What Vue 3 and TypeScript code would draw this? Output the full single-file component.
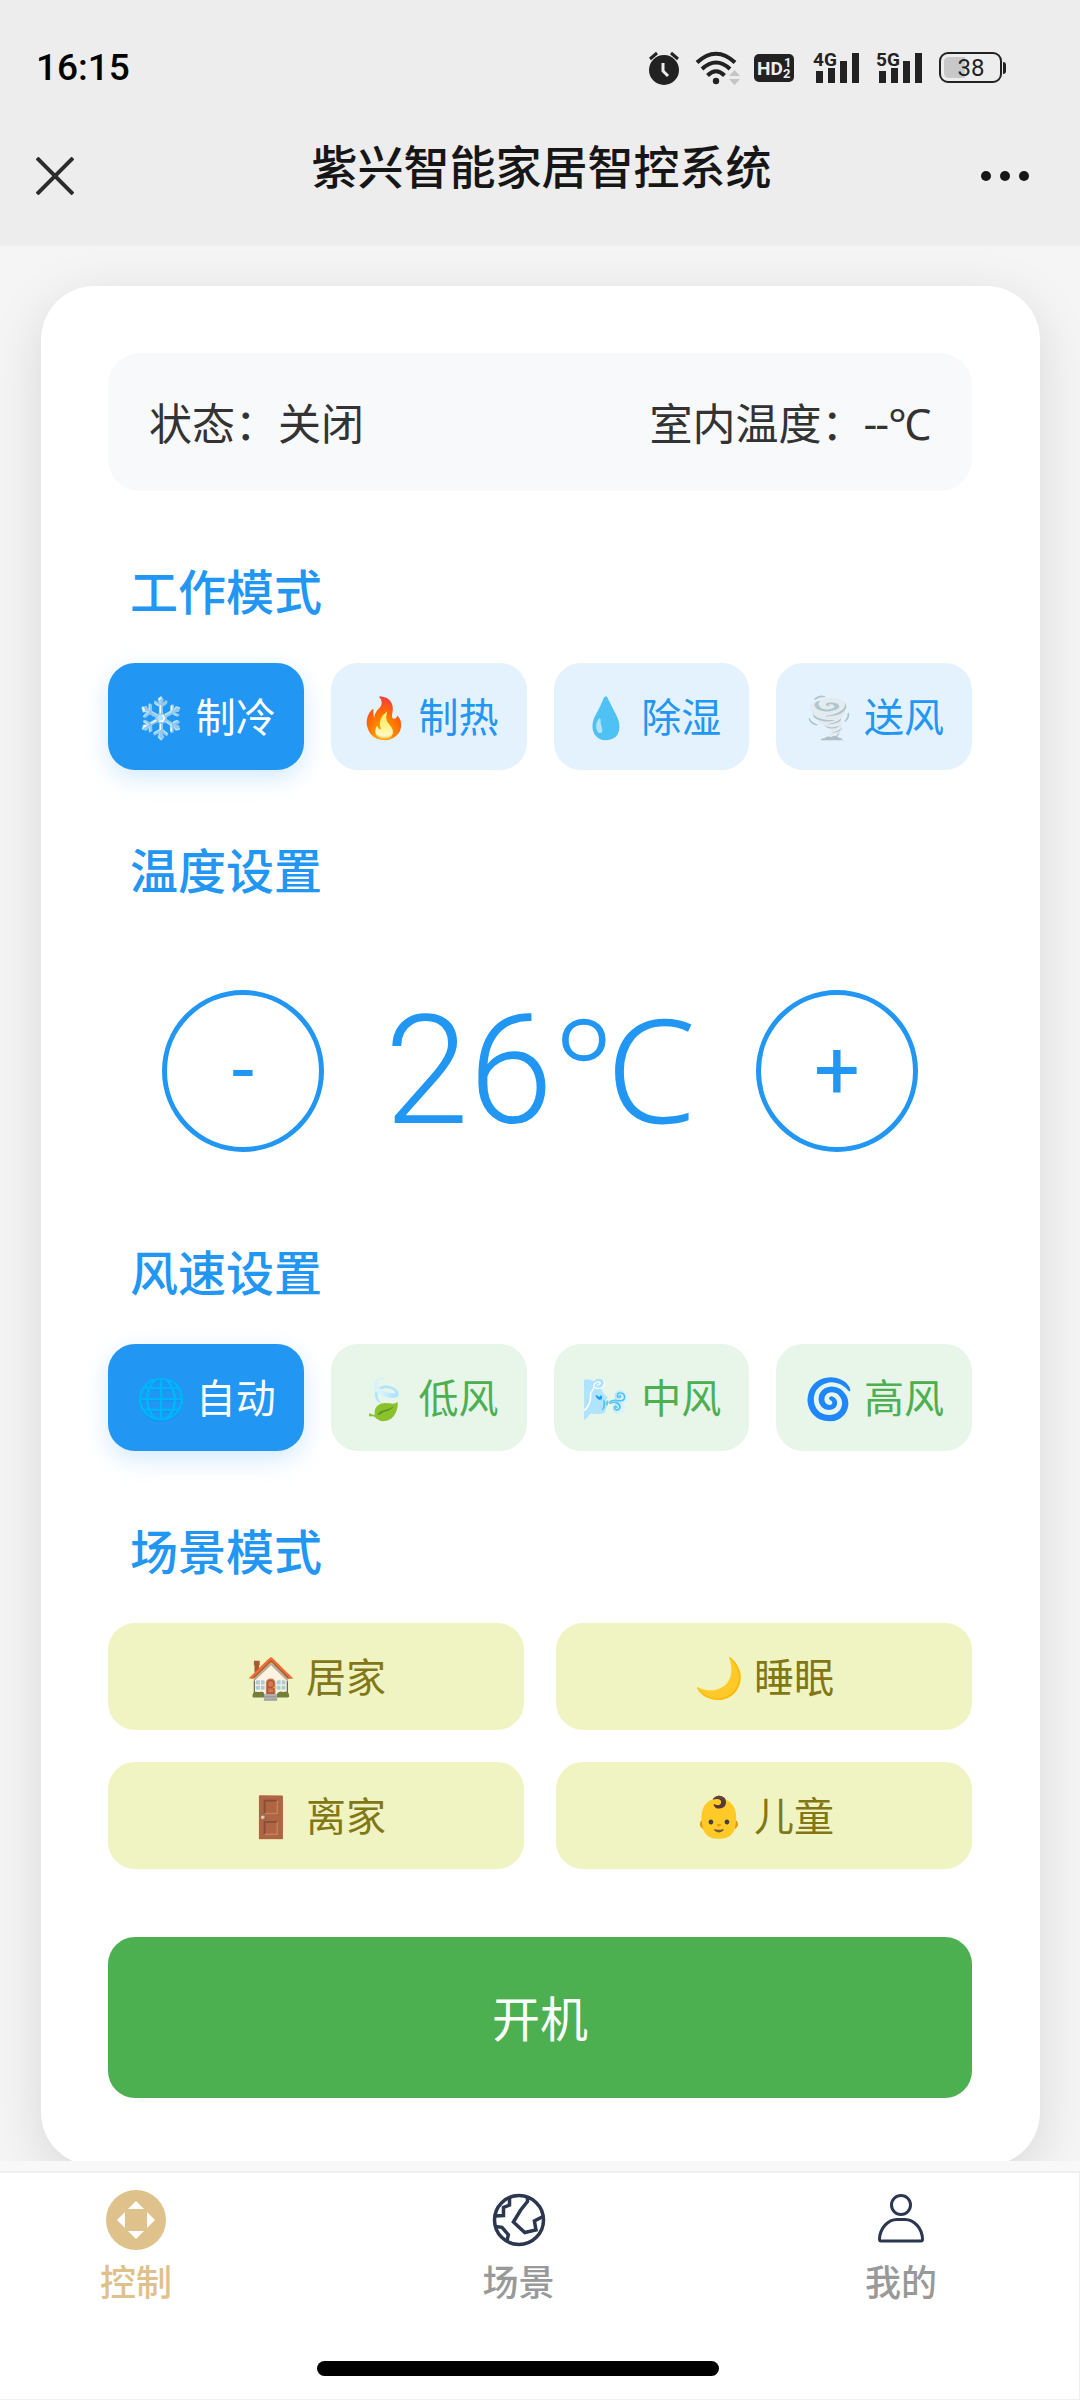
<script setup lang="ts">
import { ref } from 'vue'

interface Option {
  id: string
  icon: string
  label: string
}

const modes: Option[] = [
  { id: 'cool', icon: '❄️', label: '制冷' },
  { id: 'heat', icon: '🔥', label: '制热' },
  { id: 'dry', icon: '💧', label: '除湿' },
  { id: 'fan', icon: '🌪️', label: '送风' },
]
const speeds: Option[] = [
  { id: 'auto', icon: '🌐', label: '自动' },
  { id: 'low', icon: '🍃', label: '低风' },
  { id: 'mid', icon: '🌬️', label: '中风' },
  { id: 'high', icon: '🌀', label: '高风' },
]
const scenes: Option[] = [
  { id: 'home', icon: '🏠', label: '居家' },
  { id: 'sleep', icon: '🌙', label: '睡眠' },
  { id: 'away', icon: '🚪', label: '离家' },
  { id: 'kids', icon: '👶', label: '儿童' },
]

const power = ref(false)
const mode = ref('cool')
const speed = ref('auto')
const scene = ref('')
const temperature = ref(26)

function step(delta: number) {
  temperature.value = Math.min(30, Math.max(16, temperature.value + delta))
}
</script>

<template>
  <div class="app">
    <header class="top">
      <div class="statusbar">
        <time class="clock">16:15</time>
        <div class="indicators">
          <svg width="32" height="36" viewBox="0 0 32 36" aria-hidden="true">
            <circle cx="16" cy="20" r="15" fill="#222" />
            <path d="M2 9 9 3M30 9 23 3" stroke="#222" stroke-width="3" fill="none" />
            <path d="M15 13v8l5 5" stroke="#ededed" stroke-width="3" fill="none" />
          </svg>
          <svg class="wifi" width="46" height="36" viewBox="0 0 46 36" aria-hidden="true">
            <g stroke="#222" stroke-width="4" fill="none">
              <path d="M2 12.500Q21 -5 40 12.500" />
              <path d="M7 19Q21 6 35 19" />
              <path d="M12.500 25.500Q21 17 29.500 25.500" />
            </g>
            <circle cx="21" cy="31" r="3.200" fill="#222" />
            <path d="M34 26h11l-5.500-6zM34 29h11l-5.500 6z" fill="#c4c4c4" />
          </svg>
          <svg class="hd" width="40" height="28" viewBox="0 0 40 28" aria-label="HD 1 2">
            <rect width="40" height="28" rx="5" fill="#222" />
            <g fill="#ededed" font-family="Roboto, sans-serif" font-weight="700">
              <text x="3" y="21" font-size="19">HD</text>
              <text x="30" y="13" font-size="13">1</text>
              <text x="29" y="24" font-size="13">2</text>
            </g>
          </svg>
          <svg v-for="net in ['4G', '5G']" :key="net" class="signal" width="46" height="48" viewBox="0 -6 46 48" aria-hidden="true">
            <text x="0" y="16" font-family="Roboto, sans-serif" font-weight="700" font-size="19" fill="#222">{{ net }}</text>
            <path d="M3 21h7v12H3zM15 18h7v15h-7zM27 11h7v22h-7zM39 3h7v30h-7z" fill="#222" />
          </svg>
          <svg class="battery" width="68" height="32" viewBox="0 0 68 32" aria-hidden="true">
            <rect x="1" y="1" width="61" height="29" rx="8" fill="none" stroke="#222" stroke-width="2" />
            <path d="M10 5h16v21H10q-5 0-5-5V10q0-5 5-5z" fill="#c8c8c8" />
            <path d="M64 10q3 0 3 3v6q0 3-3 3z" fill="#222" />
            <text x="32" y="24" text-anchor="middle" font-family="Roboto, sans-serif" font-size="24" fill="#222">38</text>
          </svg>
        </div>
      </div>
      <div class="titlebar">
        <button class="bar-btn" type="button" aria-label="关闭">
          <svg width="38" height="38" viewBox="0 0 38 38"><path d="M1 1 37 37M37 1 1 37" stroke="#2c2c2c" stroke-width="4" /></svg>
        </button>
        <h1>紫兴智能家居智控系统</h1>
        <button class="bar-btn more" type="button" aria-label="更多">
          <svg width="50" height="12" viewBox="0 0 50 12" fill="#161616"><circle cx="6" cy="6" r="5" /><circle cx="25" cy="6" r="5" /><circle cx="44" cy="6" r="5" /></svg>
        </button>
      </div>
    </header>

    <main class="content">
      <div class="card">
        <div class="state">
          <span>状态：{{ power ? '开启' : '关闭' }}</span>
          <span>室内温度：--<span class="unit">℃</span></span>
        </div>

        <h2>工作模式</h2>
        <div class="row">
          <button v-for="m in modes" :key="m.id" type="button" class="opt blue" :class="{ active: mode === m.id }" @click="mode = m.id">
            {{ m.icon }} {{ m.label }}
          </button>
        </div>

        <h2>温度设置</h2>
        <div class="temp">
          <button type="button" class="round" aria-label="降低温度" @click="step(-1)">-</button>
          <output class="degrees">{{ temperature }}<span class="unit">℃</span></output>
          <button type="button" class="round" aria-label="升高温度" @click="step(1)">+</button>
        </div>

        <h2>风速设置</h2>
        <div class="row">
          <button v-for="s in speeds" :key="s.id" type="button" class="opt green" :class="{ active: speed === s.id }" @click="speed = s.id">
            {{ s.icon }} {{ s.label }}
          </button>
        </div>

        <h2>场景模式</h2>
        <div class="scenes">
          <button v-for="s in scenes" :key="s.id" type="button" class="opt lime" @click="scene = s.id">
            {{ s.icon }} {{ s.label }}
          </button>
        </div>

        <button type="button" class="power" @click="power = !power">{{ power ? '关机' : '开机' }}</button>
      </div>
    </main>

    <footer class="bottom">
      <nav class="tabs">
        <a href="#control" class="tab current">
          <svg width="60" height="60" viewBox="0 0 60 60">
            <circle cx="30" cy="30" r="30" fill="#dfc18b" />
            <path d="M30 11 38 19H22zM30 49 38 41H22zM11 30 19 22V38zM49 30 41 22V38z" fill="#fff" />
          </svg>
          控制
        </a>
        <a href="#scene" class="tab">
          <svg width="60" height="60" viewBox="0 0 60 60" fill="none" stroke="#2b374f" stroke-width="3.500">
            <circle cx="30" cy="30" r="24.500" />
            <path d="M38.500 7v4.500L31.700 20 24.400 32 35.800 42.500 47 40 45.400 31 54 26.500" />
            <path d="M20.500 8v7l-6 2.500v8l-9 .5M6 36.500l7 .800 6.300 7.400-1.300 6.500" />
          </svg>
          场景
        </a>
        <a href="#mine" class="tab">
          <svg width="60" height="60" viewBox="0 0 60 60" fill="none" stroke="#2b374f" stroke-width="3">
            <circle cx="30" cy="15" r="9.500" />
            <path d="M10 51Q8.500 51 8.500 49C9 38 17 29.500 26 29.500h8C43 29.500 51 38 51.500 49Q51.500 51 50 51z" />
          </svg>
          我的
        </a>
      </nav>
      <div class="gesture"><div class="home"></div></div>
    </footer>
  </div>
</template>

<style>
body {
  margin: 0;
}
</style>

<style scoped>
.app {
  height: 100vh;
  display: flex;
  flex-direction: column;
  background: #f5f5f5;
  color: #333;
  font-family: Roboto, 'Noto Sans CJK SC', sans-serif;
}
button {
  font-family: inherit;
  border: 0;
  padding: 0;
  background: none;
  cursor: pointer;
}
svg {
  display: block;
  flex: none;
}
.top {
  flex: none;
  background: #ededed;
  padding: 48px 0 30px;
}
.statusbar {
  display: flex;
  justify-content: space-between;
  align-items: center;
  height: 40px;
  padding: 0 73px 0 36px;
}
.clock {
  font-size: 37px;
  line-height: 40px;
  font-weight: 500;
  color: #000;
}
.indicators {
  display: flex;
  align-items: center;
}
.wifi {
  margin-left: 15px;
}
.hd {
  margin-left: 13px;
}
.signal {
  margin-left: 17px;
}
.hd + .signal {
  margin-left: 19px;
}
.battery {
  margin-left: 17px;
}
.titlebar {
  display: grid;
  grid-template-columns: 1fr auto 1fr;
  align-items: center;
  height: 80px;
  margin-top: 48px;
  padding: 0 33px 0 36px;
}
.bar-btn {
  display: flex;
  justify-self: start;
}
.more {
  justify-self: end;
  margin-right: 17px;
}
h1 {
  margin: 0 0 16px;
  font-size: 46px;
  line-height: 64px;
  font-weight: 500;
  color: #161616;
}
.content {
  flex: 1;
  min-height: 0;
  overflow: hidden auto;
  scrollbar-width: none;
}
.card {
  margin: 40px 40px 40px 41px;
  padding: 67px 68px 68px 67px;
  border-radius: 54px;
  background: #fff;
  box-shadow: 0 14px 54px rgba(0, 0, 0, 0.12);
}
.state {
  display: flex;
  justify-content: space-between;
  padding: 40px 41px 34px;
  border-radius: 32px;
  background: #f8f9fb;
  font-size: 43px;
  line-height: 64px;
}
h2 {
  margin: 74px 0 40px;
  padding-left: 22px;
  font-size: 48px;
  line-height: 58px;
  font-weight: 500;
  color: #2196f3;
}
.row {
  display: grid;
  grid-template-columns: repeat(4, 1fr);
  gap: 27px;
}
.scenes {
  display: grid;
  grid-template-columns: repeat(2, 1fr);
  gap: 32px;
}
.opt {
  height: 107px;
  padding-top: 4px;
  border-radius: 27px;
  font-size: 40px;
  line-height: 60px;
  white-space: nowrap;
}
.blue {
  background: #e3f2fd;
  color: #2196f3;
}
.green {
  background: #e8f5e9;
  color: #4caf50;
}
.lime {
  background: #f0f4c3;
  color: #827717;
}
.active {
  background: #2196f3;
  color: #fff;
  box-shadow: 0 8px 24px rgba(33, 150, 243, 0.2);
}
.temp {
  display: flex;
  justify-content: space-between;
  align-items: center;
  padding: 48px 54px 20px;
}
.round {
  width: 162px;
  height: 162px;
  border: 5px solid #2196f3;
  border-radius: 50%;
  color: #2196f3;
  font-size: 81px;
  line-height: 96px;
}
.degrees {
  font-size: 152px;
  line-height: 162px;
  font-weight: 300;
  color: #2196f3;
}
.unit {
  font-family: 'Noto Sans', 'Noto Sans CJK SC', sans-serif;
  line-height: 0;
}
.degrees .unit {
  font-size: 144px;
}
.power {
  display: block;
  width: 100%;
  height: 161px;
  margin-top: 68px;
  padding-bottom: 4px;
  border-radius: 27px;
  background: #4caf50;
  color: #fff;
  font-size: 48px;
}
.bottom {
  flex: none;
  height: 226px;
  margin-top: 10px;
  border: solid #efefef;
  border-width: 2px 1px 1px 0;
  background: #fff;
  box-shadow: 0 -10px 0 #f8f8f8;
}
.tabs {
  display: flex;
  justify-content: space-between;
  padding: 17px 142px 0 100px;
}
.tab {
  display: flex;
  flex-direction: column;
  align-items: center;
  width: 72px;
  font-size: 36px;
  line-height: 68px;
  font-weight: 500;
  color: #999;
  text-decoration: none;
}
.current {
  color: #dfc18b;
}
.gesture {
  display: flex;
  justify-content: center;
  padding: 43px 44px 0 0;
}
.home {
  width: 402px;
  height: 15px;
  border-radius: 8px;
  background: #000;
}
</style>
